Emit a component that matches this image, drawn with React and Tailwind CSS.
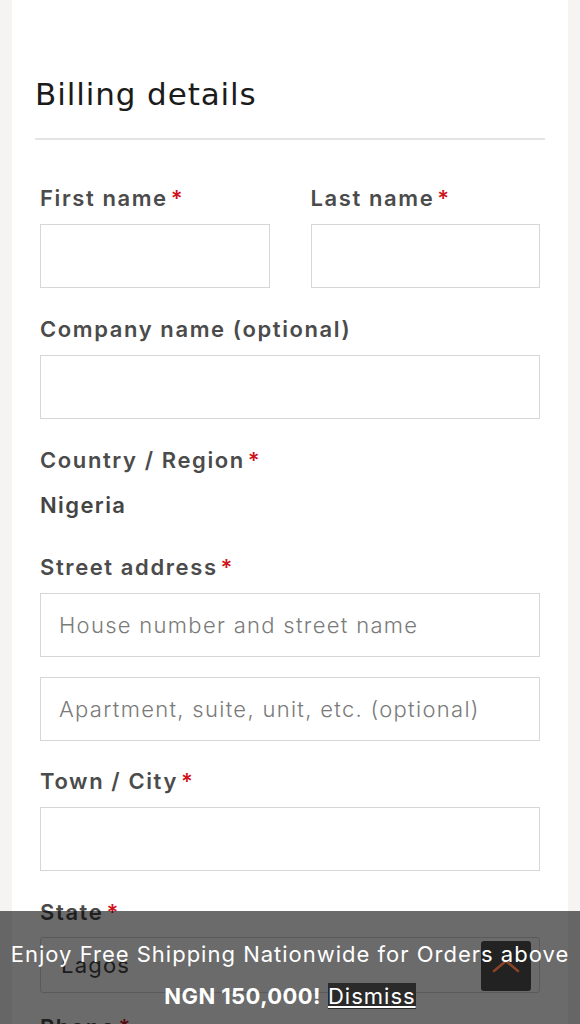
import { useState } from "react";

const labelFont = { fontFamily: "Inter, 'Noto Sans', sans-serif" };

function Label({ text, required }) {
    return (
        <label className="block h-[30px] leading-[29px] text-[22px] font-semibold text-[#4b4b4b] tracking-[1.6px]">
            {text}
            {required && <span className="text-[#d0121b] ml-[3px]">*</span>}
        </label>
    );
}

function Field({ text, required, placeholder, className = "" }) {
    return (
        <div className={`mb-[27px] ${className}`}>
            <Label text={text} required={required} />
            <input
                type="text"
                placeholder={placeholder}
                className="mt-[10px] block w-full h-[64px] border border-[#d6d6d6] bg-white px-[18px] text-[22px] font-light tracking-[1.3px] text-[#444] placeholder:text-[#7a7a7a] outline-none"
            />
        </div>
    );
}

export default function App() {
    const [showBanner, setShowBanner] = useState(true);

    return (
        <div className="relative h-[1024px] overflow-hidden bg-[#f6f4f3]" style={labelFont}>
            <div className="mx-[12px] min-h-[1100px] bg-white px-[23px] pt-[74px]">
                <h2 className="text-[31px] leading-[40px] text-[#1b1b1b] tracking-[0.9px]" style={{ fontFamily: "'DejaVu Sans', 'Liberation Sans', sans-serif" }}>
                    Billing details
                </h2>
                <div className="mt-[24px] h-[2px] bg-[#e4e4e4]" />

                <div className="px-[5px] pt-[44px]">
                    <div className="grid grid-cols-2 gap-[41px]">
                        <Field text="First name" required />
                        <Field text="Last name" required />
                    </div>

                    <Field text="Company name (optional)" />

                    <div className="mb-[33px]">
                        <Label text="Country / Region" required />
                        <div className="mt-[14px] h-[30px] leading-[30px] text-[22px] font-semibold tracking-[1.4px] text-[#444]">Nigeria</div>
                    </div>

                    <div className="mb-[26px]">
                        <Label text="Street address" required />
                        <input
                            type="text"
                            placeholder="House number and street name"
                            className="mt-[10px] block w-full h-[64px] border border-[#d6d6d6] px-[18px] text-[22px] font-light tracking-[1.3px] placeholder:text-[#7a7a7a] outline-none"
                        />
                        <input
                            type="text"
                            placeholder="Apartment, suite, unit, etc. (optional)"
                            className="mt-[20px] block w-full h-[64px] border border-[#d6d6d6] px-[18px] text-[22px] font-light tracking-[1.3px] placeholder:text-[#7a7a7a] outline-none"
                        />
                    </div>

                    <Field text="Town / City" required />

                    <div className="mb-[20px]">
                        <Label text="State" required />
                        <div className="mt-[9px] flex h-[56px] items-center border border-[#d6d6d6] rounded-[3px] px-[20px] text-[22px] tracking-[1.2px] text-[#444]">
                            Lagos
                        </div>
                    </div>

                    <Label text="Phone" required />
                </div>
            </div>

            {showBanner && (
                <div className="absolute left-0 right-0 bottom-0 h-[113px] bg-[rgba(0,0,0,0.58)]">
                    <button className="absolute left-[481px] top-[30px] flex h-[50px] w-[50px] items-center justify-center rounded-[3px] bg-[#222]">
                        <svg width="30" height="16" viewBox="0 0 30 16" fill="none">
                            <path d="M3 13 L15 3 L27 13" stroke="#8a4526" strokeWidth="2.5" strokeLinecap="round" strokeLinejoin="round" />
                        </svg>
                    </button>
                    <p className="relative pt-[22px] text-center text-[22px] leading-[42px] tracking-[1px] text-white">
                        Enjoy Free Shipping Nationwide for Orders above
                        <br />
                        <span className="font-bold tracking-[0.4px]">NGN 150,000!</span>{" "}
                        <a href="#" className="bg-[#2a2a2a] underline" onClick={(e) => { e.preventDefault(); setShowBanner(false); }}>Dismiss</a>
                    </p>
                </div>
            )}
        </div>
    );
}
